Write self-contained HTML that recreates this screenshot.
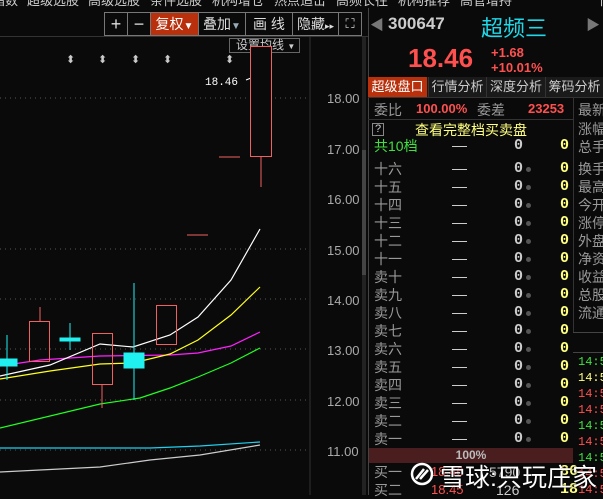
<!DOCTYPE html><html><head><meta charset="utf-8"><style>
*{margin:0;padding:0;box-sizing:border-box}
body{width:603px;height:495px;background:#0a0a0a;overflow:hidden;position:relative;font-family:"Liberation Sans","Noto Sans CJK SC",sans-serif;color:#bbb}
.a{position:absolute;white-space:nowrap}
.top{position:absolute;left:0;top:0;width:603px;height:8px;overflow:hidden;background:#0a0a0a}
.top span{position:absolute;top:-10px;font-size:13px;color:#ccc}
.btn{position:absolute;top:12px;height:24px;border:1px solid #777;color:#ddd;font-size:14px;text-align:center;line-height:22px;white-space:nowrap}
.row{position:absolute;left:374px;width:200px;height:18px;font-size:14px;line-height:18px;color:#999;white-space:nowrap}
.row .d{position:absolute;left:78px;top:9px;width:15px;height:1px;background:#ccc}
.row .z{position:absolute;left:140px;color:#ccc;font-family:"Liberation Mono",monospace;font-weight:bold;font-size:15px}
.row .o{position:absolute;left:152px;top:7px;width:5px;height:5px;border-radius:50%;background:#555}
.row .y{position:absolute;left:186px;color:#ffff80;font-family:"Liberation Mono",monospace;font-weight:bold;font-size:15px}
.rc{position:absolute;left:578px;font-size:14px;color:#999;line-height:18px;white-space:nowrap}
.t{position:absolute;left:578px;font-size:12px;font-family:"Liberation Mono",monospace;white-space:nowrap}
</style></head><body>
<div class="top">
<span style="left:-8px">指数</span><span style="left:27px">超级选股</span><span style="left:88px">高级选股</span><span style="left:150px">条件选股</span><span style="left:212px">机构增仓</span><span style="left:274px">热点追击</span><span style="left:336px">高频长往</span><span style="left:398px">机构推荐</span><span style="left:460px">高管增持</span><span style="left:595px">十</span>
</div>
<div class="btn" style="left:104px;width:24px;font-size:18px">+</div>
<div class="btn" style="left:127px;width:24px;font-size:18px">−</div>
<div class="btn" style="left:150px;width:49px;background:#b8300c;color:#fff">复权<span style="font-size:10px">▼</span></div>
<div class="btn" style="left:198px;width:48px">叠加<span style="font-size:10px;color:#9ab">▼</span></div>
<div class="btn" style="left:245px;width:48px">画 线</div>
<div class="btn" style="left:292px;width:47px">隐藏<span style="font-size:9px">▸▸</span></div>
<div class="btn" style="left:338px;width:24px;font-size:13px">⛶</div>
<div class="a" style="left:0;top:36px;width:368px;height:1px;background:#333"></div>
<div class="a" style="left:229px;top:38px;width:71px;height:15px;border:1px solid #666;font-size:12px;line-height:13px;color:#ccc;padding-left:6px">设置均线 <span style="font-size:8px">▼</span></div>
<svg class="a" style="left:0;top:0" width="368" height="495">
<g stroke="#555" stroke-dasharray="1,4">
<line x1="0" y1="98" x2="308" y2="98"/><line x1="0" y1="249" x2="308" y2="249"/><line x1="0" y1="299" x2="308" y2="299"/><line x1="0" y1="349" x2="308" y2="349"/><line x1="0" y1="400" x2="308" y2="400"/><line x1="0" y1="450" x2="308" y2="450"/>
</g>
<line x1="310" y1="37" x2="310" y2="495" stroke="#333"/>
<rect x="362" y="37" width="4" height="458" fill="#222"/><rect x="362" y="150" width="4" height="125" fill="#444"/>
<g fill="#ccc" font-size="11" font-family="Liberation Sans">
<text x="66" y="63">⬍</text><text x="98" y="63">⬍</text><text x="131" y="63">⬍</text><text x="163" y="63">⬍</text><text x="225" y="63">⬍</text><text x="256" y="63">✳</text>
</g>
<text x="205" y="85" fill="#fff" font-size="11" font-family="Liberation Mono">18.46</text>
<line x1="246" y1="80" x2="256" y2="76" stroke="#fff"/>
<g fill="#aaa" font-size="13" font-family="Liberation Sans">
<text x="327" y="103">18.00</text><text x="327" y="154">17.00</text><text x="327" y="204">16.00</text><text x="327" y="255">15.00</text><text x="327" y="305">14.00</text><text x="327" y="355">13.00</text><text x="327" y="406">12.00</text><text x="327" y="456">11.00</text>
</g>
<g fill="none" stroke-width="1.2">
<polyline stroke="#ccc" points="0,472 100,467 150,460 200,455 260,445"/>
<polyline stroke="#20d0f0" points="0,448 150,448 200,446 260,442"/>
<polyline stroke="#20ff20" points="0,428 100,404 140,398 170,388 198,377 231,363 260,348"/>
<polyline stroke="#ff20ff" points="0,366 40,360 100,356 170,355 198,353 231,346 260,332"/>
<polyline stroke="#ffff20" points="0,379 50,371 100,364 133,363 170,354 198,340 231,315 260,287"/>
<polyline stroke="#fff" points="0,376 50,365 100,344 133,347 170,335 198,317 231,280 260,229"/>
</g>
<g stroke="#20f0f0" fill="#20f0f0">
<line x1="7" y1="335" x2="7" y2="380"/><rect x="0" y="359" width="17" height="7"/>
<line x1="70" y1="323" x2="70" y2="350"/><rect x="60" y="338" width="20" height="3"/>
<line x1="134" y1="283" x2="134" y2="400"/><rect x="124" y="353" width="20" height="15"/>
</g>
<g stroke="#f06060" fill="none">
<line x1="40" y1="307" x2="40" y2="321"/><rect x="29.5" y="321.5" width="20" height="40"/>
<line x1="102" y1="384" x2="102" y2="408"/><rect x="92.5" y="333.5" width="20" height="51"/>
<rect x="156.5" y="305.5" width="20" height="39"/>
<line x1="187" y1="235" x2="208" y2="235"/><line x1="219" y1="157" x2="240" y2="157"/>
<line x1="261" y1="156" x2="261" y2="187"/><rect x="250.5" y="46.5" width="21" height="110" fill="#0a0a0a"/>
</g>
</svg>
<div class="a" style="left:368px;top:8px;width:1px;height:487px;background:#444"></div>
<div class="a" style="left:370px;top:15px;color:#777;font-size:14px">◀</div>
<div class="a" style="left:388px;top:14px;color:#ccc;font-size:17px;font-weight:bold">300647</div>
<div class="a" style="left:481px;top:11px;color:#20d8e8;font-size:22px">超频三</div>
<div class="a" style="left:586px;top:15px;color:#777;font-size:14px">▶</div>
<div class="a" style="left:408px;top:43px;color:#ff5050;font-size:26px;font-weight:bold">18.46</div>
<div class="a" style="left:491px;top:45px;color:#ff5050;font-size:13px;font-weight:bold">+1.68</div>
<div class="a" style="left:491px;top:60px;color:#ff5050;font-size:13px;font-weight:bold">+10.01%</div>
<div class="a" style="left:368px;top:77px;width:235px;height:20px;background:#1a1a1a;font-size:13px;line-height:20px;color:#ccc">
<span class="a" style="left:0;width:59px;background:#b8300c;color:#fff;text-align:center">超级盘口</span>
<span class="a" style="left:60px;width:58px;text-align:center;border-left:1px solid #333">行情分析</span>
<span class="a" style="left:118px;width:59px;text-align:center;border-left:1px solid #333">深度分析</span>
<span class="a" style="left:177px;width:58px;text-align:center;border-left:1px solid #333">筹码分析</span>
</div>
<div class="a" style="left:368px;top:97px;width:235px;height:1px;background:#333"></div>
<div class="a" style="left:573px;top:97px;width:1px;height:236px;background:#333"></div>
<div class="a" style="left:374px;top:100px;font-size:14px;color:#999">委比</div>
<div class="a" style="left:416px;top:101px;font-size:13px;color:#ff5050;font-weight:bold">100.00%</div>
<div class="a" style="left:477px;top:100px;font-size:14px;color:#999">委差</div>
<div class="a" style="left:528px;top:101px;font-size:13px;color:#ff5050;font-weight:bold">23253</div>
<div class="a" style="left:368px;top:119px;width:205px;height:1px;background:#333"></div>
<div class="a" style="left:372px;top:123px;width:12px;height:13px;border:1px solid #888;font-size:11px;line-height:11px;text-align:center;color:#ccc">?</div>
<div class="a" style="left:415px;top:120px;font-size:14px;color:#ffff80">查看完整档买卖盘</div>
<div class="row" style="top:137px"><span style="color:#40e040">共10档</span><span class="d"></span><span class="z">0</span><span class="y">0</span></div>
<div class="row" style="top:160px">十六<span class="d"></span><span class="z">0</span><span class="o"></span><span class="y">0</span></div>
<div class="row" style="top:178px">十五<span class="d"></span><span class="z">0</span><span class="o"></span><span class="y">0</span></div>
<div class="row" style="top:196px">十四<span class="d"></span><span class="z">0</span><span class="o"></span><span class="y">0</span></div>
<div class="row" style="top:214px">十三<span class="d"></span><span class="z">0</span><span class="o"></span><span class="y">0</span></div>
<div class="row" style="top:232px">十二<span class="d"></span><span class="z">0</span><span class="o"></span><span class="y">0</span></div>
<div class="row" style="top:250px">十一<span class="d"></span><span class="z">0</span><span class="o"></span><span class="y">0</span></div>
<div class="row" style="top:268px">卖十<span class="d"></span><span class="z">0</span><span class="o"></span><span class="y">0</span></div>
<div class="row" style="top:286px">卖九<span class="d"></span><span class="z">0</span><span class="o"></span><span class="y">0</span></div>
<div class="row" style="top:304px">卖八<span class="d"></span><span class="z">0</span><span class="o"></span><span class="y">0</span></div>
<div class="row" style="top:322px">卖七<span class="d"></span><span class="z">0</span><span class="o"></span><span class="y">0</span></div>
<div class="row" style="top:340px">卖六<span class="d"></span><span class="z">0</span><span class="o"></span><span class="y">0</span></div>
<div class="row" style="top:358px">卖五<span class="d"></span><span class="z">0</span><span class="o"></span><span class="y">0</span></div>
<div class="row" style="top:376px">卖四<span class="d"></span><span class="z">0</span><span class="o"></span><span class="y">0</span></div>
<div class="row" style="top:394px">卖三<span class="d"></span><span class="z">0</span><span class="o"></span><span class="y">0</span></div>
<div class="row" style="top:412px">卖二<span class="d"></span><span class="z">0</span><span class="o"></span><span class="y">0</span></div>
<div class="row" style="top:430px">卖一<span class="d"></span><span class="z">0</span><span class="o"></span><span class="y">0</span></div>
<div class="a" style="left:369px;top:448px;width:204px;height:15px;background:#4a1e1e;text-align:center;font-size:12px;font-weight:bold;line-height:15px;color:#bbb">100%</div>
<div class="row" style="top:463px">买一<span class="a" style="left:57px;color:#ff5050;font-size:13px">18.46</span><span class="a" style="left:115px;color:#ccc">5790</span><span class="y">86</span></div>
<div class="row" style="top:481px">买二<span class="a" style="left:57px;color:#ff5050;font-size:13px">18.45</span><span class="a" style="left:122px;color:#ccc">126</span><span class="y">18</span></div>
<div class="a" style="left:573px;top:332px;width:30px;height:1px;background:#444"></div>
<div class="a" style="left:573px;top:352px;width:30px;height:1px;background:#444"></div>
<div class="rc" style="top:101px">最新</div><div class="rc" style="top:120px">涨幅</div><div class="rc" style="top:138px">总手</div><div class="rc" style="top:160px">换手</div><div class="rc" style="top:178px">最高</div><div class="rc" style="top:196px">今开</div><div class="rc" style="top:214px">涨停</div><div class="rc" style="top:232px">外盘</div><div class="rc" style="top:250px">净资</div><div class="rc" style="top:268px">收益</div><div class="rc" style="top:286px">总股</div><div class="rc" style="top:304px">流通</div>
<div class="t" style="top:355px;color:#40e040">14:55</div><div class="t" style="top:371px;color:#ffff80">14:55</div><div class="t" style="top:387px;color:#ff5050">14:55</div><div class="t" style="top:403px;color:#ff5050">14:55</div><div class="t" style="top:419px;color:#40e040">14:55</div><div class="t" style="top:435px;color:#ff5050">14:55</div><div class="t" style="top:451px;color:#40e040">14:55</div><div class="t" style="top:467px;color:#ff5050">14:55</div><div class="t" style="top:483px;color:#ff5050">14:55</div>
<svg class="a" style="left:410px;top:462px" width="24" height="24"><circle cx="12" cy="12" r="10" fill="none" stroke="#fff" stroke-width="2.5"/><path d="M6 17 L14 7 M10 17 L18 8" stroke="#fff" stroke-width="2.5" fill="none"/></svg>
<div class="a" style="left:440px;top:458px;font-size:25px;color:#fff;text-shadow:0 0 2px #000">雪球:只玩庄家</div>
</body></html>
